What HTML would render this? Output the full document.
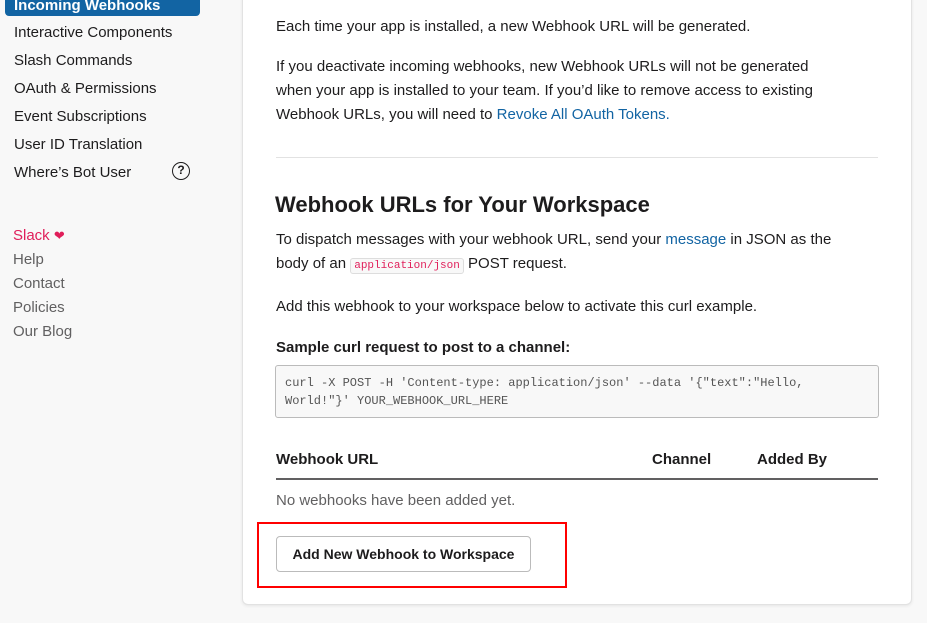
<!DOCTYPE html>
<html><head><meta charset="utf-8"><style>
*{margin:0;padding:0;box-sizing:border-box}
body{width:927px;height:623px;overflow:hidden;background:#f8f8f8;font-family:"Liberation Sans",sans-serif;color:#1d1c1d;position:relative;font-size:15px}
.a{position:absolute;white-space:nowrap}
.nav{left:14px;font-size:15px;color:#1d1c1d}
.ft{left:13px;font-size:15px;color:#616061}
.card{position:absolute;left:242px;top:-10px;width:670px;height:615px;background:#fff;border:1px solid #e2e2e2;border-radius:6px;box-shadow:0 1px 3px rgba(0,0,0,.08)}
.t{left:276px;font-size:15px;line-height:24px}
a{color:#1264a3;text-decoration:none}
</style></head><body>
<div class="a" style="left:5px;top:-10px;width:195px;height:26px;background:#1264a3;border-radius:4px"></div>
<div class="a nav" style="top:-3px;color:#fff;font-weight:bold">Incoming Webhooks</div>
<div class="a nav" style="top:24px">Interactive Components</div>
<div class="a nav" style="top:52px">Slash Commands</div>
<div class="a nav" style="top:80px">OAuth &amp; Permissions</div>
<div class="a nav" style="top:108px">Event Subscriptions</div>
<div class="a nav" style="top:136px">User ID Translation</div>
<div class="a nav" style="top:164px">Where’s Bot User</div>
<div class="a" style="left:172px;top:162px;width:18px;height:18px;border:1.5px solid #1d1c1d;border-radius:50%;font-size:12px;font-weight:bold;text-align:center;line-height:15px">?</div>
<div class="a ft" style="top:227px;color:#e01e5a">Slack <span style="font-size:13px">❤</span></div>
<div class="a ft" style="top:251px">Help</div>
<div class="a ft" style="top:275px">Contact</div>
<div class="a ft" style="top:299px">Policies</div>
<div class="a ft" style="top:323px">Our Blog</div>

<div class="card"></div>
<div class="a t" style="top:15px">Each time your app is installed, a new Webhook URL will be generated.</div>
<div class="a t" style="top:55px">If you deactivate incoming webhooks, new Webhook URLs will not be generated<br>when your app is installed to your team. If you’d like to remove access to existing<br>Webhook URLs, you will need to <a>Revoke All OAuth Tokens.</a></div>
<div class="a" style="left:276px;top:157px;width:602px;height:1px;background:#e2e2e2"></div>
<div class="a" style="left:275px;top:192px;font-size:22px;font-weight:bold">Webhook URLs for Your Workspace</div>
<div class="a t" style="top:228px">To dispatch messages with your webhook URL, send your <a>message</a> in JSON as the<br>body of an <span style="font-family:'Liberation Mono',monospace;font-size:11px;color:#e01e5a;background:#f8f8f8;border:1px solid #ddd;border-radius:3px;padding:1px 3px">application/json</span> POST request.</div>
<div class="a t" style="top:295px">Add this webhook to your workspace below to activate this curl example.</div>
<div class="a t" style="top:336px;font-weight:bold">Sample curl request to post to a channel:</div>
<div class="a" style="left:275px;top:365px;width:604px;height:53px;background:#f8f8f8;border:1px solid #bbb;border-radius:3px;padding:8px 9px;font-family:'Liberation Mono',monospace;font-size:12px;line-height:18px;color:#555;white-space:normal">curl -X POST -H 'Content-type: application/json' --data '{"text":"Hello,<br>World!"}' YOUR_WEBHOOK_URL_HERE</div>
<div class="a t" style="top:448px;font-weight:bold">Webhook URL</div>
<div class="a t" style="top:448px;left:652px;font-weight:bold">Channel</div>
<div class="a t" style="top:448px;left:757px;font-weight:bold">Added By</div>
<div class="a" style="left:276px;top:478px;width:602px;height:2px;background:#616061"></div>
<div class="a t" style="top:489px;color:#616061">No webhooks have been added yet.</div>
<div class="a" style="left:276px;top:536px;width:255px;height:36px;border:1px solid #bbb;border-radius:4px;background:#fff;font-weight:bold;font-size:14px;text-align:center;line-height:34px">Add New Webhook to Workspace</div>
<div class="a" style="left:257px;top:522px;width:310px;height:66px;border:2px solid #f00"></div>
</body></html>
